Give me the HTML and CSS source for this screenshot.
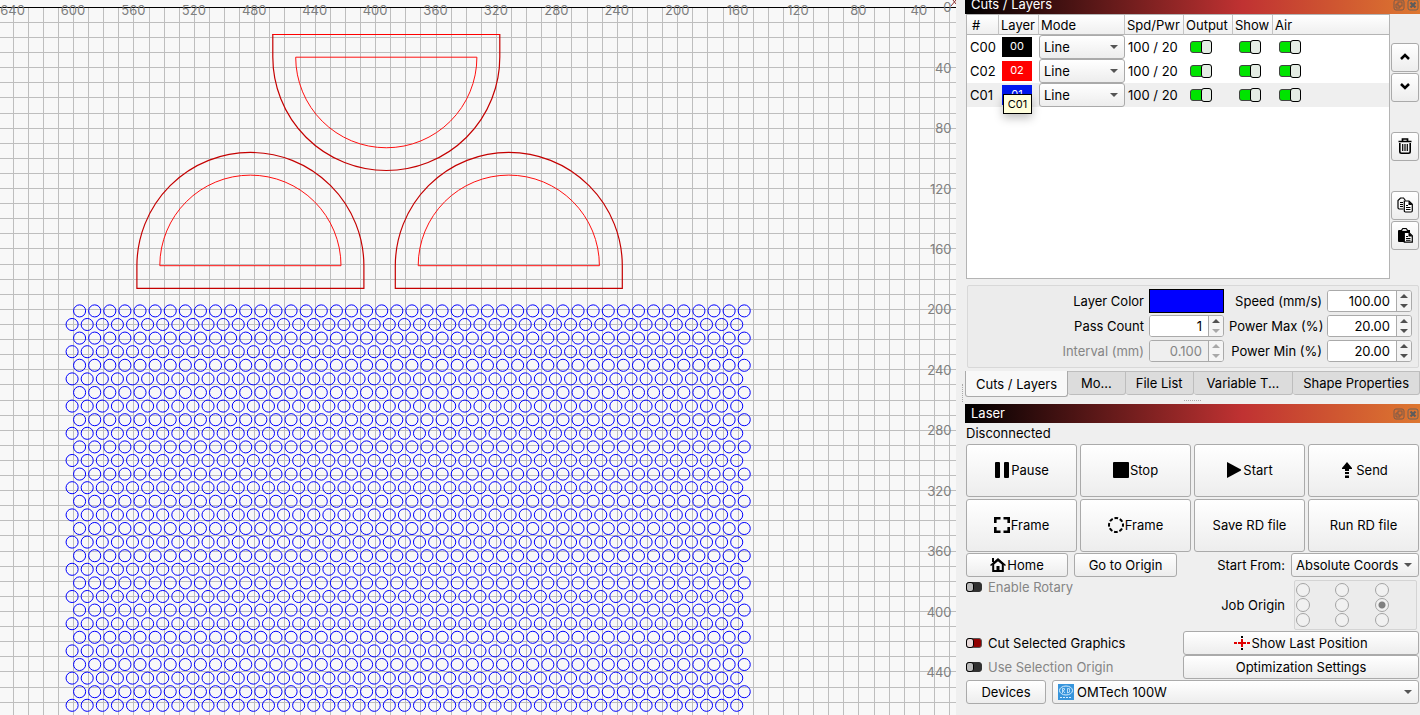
FILE: index.html
```html
<!DOCTYPE html>
<html lang="en">
<head>
<meta charset="utf-8">
<title>Laser workspace</title>
<link rel="stylesheet" href="styles.css">
</head>
<body>
<svg class="sprite" aria-hidden="true">
  <symbol id="i-float" viewBox="0 0 12 12"><g fill="none" stroke="#7b5a48"><rect x="1" y="1" width="10" height="10" rx="2"/><rect x="5" y="3" width="4" height="4"/><path d="M5 5H3v4h4V7"/></g></symbol>
  <symbol id="i-close" viewBox="0 0 12 12"><rect x="1" y="1" width="10" height="10" rx="2" fill="none" stroke="#6e6258"/><path d="M3.500 3.500l5 5M8.500 3.500l-5 5" stroke="#5c5c5c" stroke-width="2.200"/></symbol>
  <symbol id="i-spin-up" viewBox="0 0 8 4"><path d="M0 4L4 0l4 4z" fill="currentColor"/></symbol>
  <symbol id="i-spin-down" viewBox="0 0 8 4"><path d="M0 0h8L4 4z" fill="currentColor"/></symbol>
</svg>
<div class="app">
  <main class="canvas"><svg class="board" id="board" role="img" aria-label="Work area"></svg></main>
  <div class="splitter"><span class="dots-v"></span></div>
  <aside class="panel">
    <section class="dock dock-cuts">
      <header class="title title-cut"><h2>Cuts / Layers</h2><span class="title-icons"><svg><use href="#i-float"/></svg><svg><use href="#i-close"/></svg></span></header>
      <div class="cuts">
        <div class="list">
          <table class="layers">
            <colgroup><col class="c-num"><col class="c-layer"><col class="c-mode"><col class="c-spd"><col class="c-out"><col class="c-show"><col></colgroup>
            <thead><tr><th class="num">#</th><th>Layer</th><th>Mode</th><th>Spd/Pwr</th><th>Output</th><th>Show</th><th>Air</th></tr></thead>
            <tbody>
              <tr><td>C00</td><td><span class="chip chip-black">00</span></td><td><span class="pick"><select aria-label="Mode C00"><option>Line</option></select></span></td><td>100 / 20</td><td><input class="toggle" type="checkbox" checked aria-label="Output C00"></td><td><input class="toggle" type="checkbox" checked aria-label="Show C00"></td><td><input class="toggle" type="checkbox" checked aria-label="Air C00"></td></tr>
              <tr><td>C02</td><td><span class="chip chip-red">02</span></td><td><span class="pick"><select aria-label="Mode C02"><option>Line</option></select></span></td><td>100 / 20</td><td><input class="toggle" type="checkbox" checked aria-label="Output C02"></td><td><input class="toggle" type="checkbox" checked aria-label="Show C02"></td><td><input class="toggle" type="checkbox" checked aria-label="Air C02"></td></tr>
              <tr class="selected"><td>C01</td><td><span class="chip chip-blue">01<span class="tip" role="tooltip">C01</span></span></td><td><span class="pick"><select aria-label="Mode C01"><option>Line</option></select></span></td><td>100 / 20</td><td><input class="toggle" type="checkbox" checked aria-label="Output C01"></td><td><input class="toggle" type="checkbox" checked aria-label="Show C01"></td><td><input class="toggle" type="checkbox" checked aria-label="Air C01"></td></tr>
            </tbody>
          </table>
        </div>
        <div class="tools">
          <button class="btn tool" aria-label="Move up"><svg width="16" height="16" viewBox="0 0 16 16"><path d="M4 10l4-4 4 4" fill="none" stroke="#000" stroke-width="2.500"/></svg></button>
          <button class="btn tool" aria-label="Move down"><svg width="16" height="16" viewBox="0 0 16 16"><path d="M4 5l4 4 4-4" fill="none" stroke="#000" stroke-width="2.500"/></svg></button>
          <button class="btn tool apart" aria-label="Delete"><svg width="16" height="16" viewBox="0 0 16 16"><path d="M5.500 3V1h5v2M1.500 3.500h13" fill="none" stroke="#000" stroke-width="1.700"/><path d="M2.800 5v8.500q0 1.700 1.700 1.700h7q1.700 0 1.700-1.700V5" fill="none" stroke="#000" stroke-width="1.600"/><path d="M5.700 6v7M8 6v7M10.300 6v7" stroke="#000" stroke-width="1.200"/></svg></button>
          <button class="btn tool apart" aria-label="Copy"><svg width="16" height="16" viewBox="0 0 16 16"><path d="M6.500 12H2.200Q1 12 1 10.800V3.500L3.500 1H6.500L8.500 3.500" fill="none" stroke="#000" stroke-width="1.200"/><path d="M3 5.500h3M3 7.500h3M3 9.500h3" stroke="#000"/><path d="M7.300 4h4.700l3.300 3.300v6.500q0 1.200-1.200 1.200H8.500q-1.200 0-1.200-1.200z" fill="#fff" stroke="#000" stroke-width="1.200"/><path d="M11.500 4v4h4z"/><path d="M9 8.500h2M9 10.500h4.500M9 12.500h4.500" stroke="#000"/></svg></button>
          <button class="btn tool" aria-label="Paste"><svg width="16" height="16" viewBox="0 0 16 16"><path d="M2 3h2l1.500-2h4L11 3h2v3H7.500v9H2q-1 0-1-1V4q0-1 1-1z"/><path d="M5 4h5l-1-2H6z" fill="#ddd"/><path d="M7.300 5.500h4.700l3.300 3.300v6.400h-8z" fill="#fff" stroke="#000" stroke-width="1.200"/><path d="M11.500 5.500v4h4z"/><path d="M9 9.500h2M9 11.500h4.500M9 13.300h4.500" stroke="#000"/></svg></button>
        </div>
      </div>
      <div class="settings">
        <label for="color">Layer Color</label><button class="swatch" id="color" aria-label="Layer Color"></button>
        <label for="speed">Speed (mm/s)</label><span class="spin"><input id="speed" type="text" value="100.00"><span class="steps"><button aria-label="Up"><svg><use href="#i-spin-up"/></svg></button><button aria-label="Down"><svg><use href="#i-spin-down"/></svg></button></span></span>
        <label for="pass">Pass Count</label><span class="spin"><input id="pass" type="text" value="1"><span class="steps"><button aria-label="Up"><svg><use href="#i-spin-up"/></svg></button><button disabled aria-label="Down"><svg><use href="#i-spin-down"/></svg></button></span></span>
        <label for="pmax">Power Max (%)</label><span class="spin"><input id="pmax" type="text" value="20.00"><span class="steps"><button aria-label="Up"><svg><use href="#i-spin-up"/></svg></button><button aria-label="Down"><svg><use href="#i-spin-down"/></svg></button></span></span>
        <label class="muted" for="interval">Interval (mm)</label><span class="spin"><input id="interval" type="text" value="0.100" disabled><span class="steps"><button disabled aria-label="Up"><svg><use href="#i-spin-up"/></svg></button><button disabled aria-label="Down"><svg><use href="#i-spin-down"/></svg></button></span></span>
        <label for="pmin">Power Min (%)</label><span class="spin"><input id="pmin" type="text" value="20.00"><span class="steps"><button aria-label="Up"><svg><use href="#i-spin-up"/></svg></button><button aria-label="Down"><svg><use href="#i-spin-down"/></svg></button></span></span>
      </div>
      <div class="tabs" role="tablist">
        <button class="tab active" role="tab" aria-selected="true">Cuts / Layers</button><button class="tab" role="tab">Mo...</button><button class="tab" role="tab">File List</button><button class="tab" role="tab">Variable T...</button><button class="tab" role="tab">Shape Properties</button>
      </div>
    </section>
    <div class="divider"><span class="dots-h"></span></div>
    <section class="dock">
      <header class="title"><h2>Laser</h2><span class="title-icons"><svg><use href="#i-float"/></svg><svg><use href="#i-close"/></svg></span></header>
      <div class="laser">
        <p class="status">Disconnected</p>
        <div class="actions">
          <button class="btn"><svg width="16" height="16"><rect x="1" width="5" height="16" rx="1"/><rect x="10" width="5" height="16" rx="1"/></svg>Pause</button>
          <button class="btn"><svg width="16" height="16"><rect width="16" height="16" rx="1"/></svg>Stop</button>
          <button class="btn"><svg width="16" height="16"><path d="M1 0l14 7.500v1L1 16z"/></svg>Start</button>
          <button class="btn"><svg width="16" height="16"><path d="M8 0l5 6v1h-3v2H6V7H3V6zM6 10h4v2H6zM6 13.500h4V16H6z"/></svg>Send</button>
          <button class="btn"><svg width="16" height="16"><path d="M1.300 6V1.300H6.500M9.500 1.300h5.200V6M14.700 10v4.700H9.500M6.500 14.700H1.300V10" fill="none" stroke="#000" stroke-width="2.600"/></svg>Frame</button>
          <button class="btn"><svg width="16" height="16"><circle cx="8" cy="8" r="7" fill="none" stroke="#000" stroke-width="2" stroke-dasharray="3.700 1.798" stroke-dashoffset="1.800"/></svg>Frame</button>
          <button class="btn">Save RD file</button>
          <button class="btn">Run RD file</button>
        </div>
        <div class="origin-row">
          <button class="btn home"><svg width="16" height="16"><path d="M0 8L8 1l8 7-1 1-7-6-7 6z"/><path d="M2 1h2v4H2z"/><path d="M3.200 7v7h9.600V7M3.200 7L8 3l4.800 4" fill="none" stroke="#000" stroke-width="2"/><path d="M6.500 9h3v5h-3z"/></svg>Home</button>
          <button class="btn goto">Go to Origin</button>
          <label class="grow" for="from">Start From:</label>
          <span class="pick from"><select id="from"><option>Absolute Coords</option></select></span>
        </div>
        <div class="options">
          <label class="opt muted"><input class="mini" type="checkbox" disabled>Enable Rotary</label>
          <span class="job-label">Job Origin</span>
          <div class="job" role="radiogroup" aria-label="Job Origin">
            <input type="radio" name="job" aria-label="Top left"><input type="radio" name="job" aria-label="Top"><input type="radio" name="job" aria-label="Top right">
            <input type="radio" name="job" aria-label="Left"><input type="radio" name="job" aria-label="Centre"><input type="radio" name="job" checked aria-label="Right">
            <input type="radio" name="job" aria-label="Bottom left"><input type="radio" name="job" aria-label="Bottom"><input type="radio" name="job" aria-label="Bottom right">
          </div>
        </div>
        <div class="pair">
          <label class="opt"><input class="mini mini-red" type="checkbox">Cut Selected Graphics</label>
          <button class="btn"><svg width="16" height="16"><path d="M8 1v2M8 13v2" stroke="#000" stroke-width="2"/><path d="M0 8h3M4 8h3M9 8h3M13 8h3M8 4v3M8 9v3" stroke="#e00000" stroke-width="2"/><circle cx="8" cy="8" r="1.500" fill="#e00000"/></svg>Show Last Position</button>
          <label class="opt muted"><input class="mini" type="checkbox" disabled>Use Selection Origin</label>
          <button class="btn">Optimization Settings</button>
        </div>
        <div class="device-row">
          <button class="btn devices">Devices</button>
          <span class="pick device"><svg class="device-icon" width="16" height="16"><rect width="16" height="16" fill="#3795dc"/><g fill="none" stroke="#d8efff"><ellipse cx="8" cy="6.500" rx="6.500" ry="4.500"/><path d="M4.500 9V4.500q3-.5 2 1.500l-1.500.7L7 9M9.500 9V4.500q3-.5 2 1.800 1 2.200-2 2.700" stroke-width=".8"/><path d="M2 13.500h12" stroke-dasharray="2 1"/></g></svg><select aria-label="Device"><option>OMTech 100W</option></select></span>
        </div>
      </div>
    </section>
  </aside>
</div>
<script src="board.js"></script>
</body>
</html>
```
FILE: styles.css
```css
*, *::before, *::after { box-sizing: border-box; }
body { margin: 0; background: #efefef; color: #000; font: 13px/16px Inter, "Liberation Sans", sans-serif; }
button, input, select { font: inherit; color: inherit; margin: 0; padding: 0; }
h2, p { margin: 0; font: inherit; }
.sprite { display: none; }
.app { display: grid; grid-template-columns: minmax(0, 1fr) 9px 455px; height: 100vh; overflow: hidden; }
.canvas { background: #f8f8f8; overflow: hidden; }
.board { display: block; width: 100%; height: 100%; }
.board text { fill: #808080; font-size: 13px; }
.splitter { display: flex; justify-content: center; align-items: center; padding: 70px 0 0 4px; }
.dots-v { height: 18px; border-left: 1px dotted #aaa; }
.panel { display: flex; flex-direction: column; min-height: 0; }
.dock-cuts { flex: 1; display: flex; flex-direction: column; min-height: 0; }

.title { display: flex; justify-content: space-between; align-items: center; height: 19px; padding: 0 1px 0 6px; color: #fff; background: linear-gradient(90deg, #000, #c03232 61%, #dd7730); overflow: hidden; }
.title h2 { line-height: 19px; }
.title-cut { height: 14px; align-items: flex-end; }
.title-icons { display: flex; gap: 2px; }
.title-icons svg { width: 12px; height: 12px; }
.title-cut .title-icons { padding-bottom: 3px; }

.btn { display: flex; align-items: center; justify-content: center; gap: 1px; border: 1px solid #aaa; border-radius: 3px; background: linear-gradient(#fff, #ededed); white-space: nowrap; }

.cuts { flex: 1; display: flex; gap: 1px; padding: 0 1px; min-height: 0; }
.list { flex: 1; min-width: 0; background: #fff; border: 1px solid #b4b4b4; }
.tools { width: 28px; display: flex; flex-direction: column; gap: 1px; padding-top: 29px; }
.tool { height: 29px; padding-bottom: 2px; }
.apart { margin-top: 29px; }

.layers { width: 100%; table-layout: fixed; border-collapse: separate; border-spacing: 0; }
.c-num { width: 32px; } .c-layer { width: 40px; } .c-mode { width: 86px; } .c-spd { width: 59px; } .c-out { width: 49px; } .c-show { width: 40px; }
.layers th { height: 20px; padding: 1px 0 0 2px; font-weight: 400; text-align: left; background: linear-gradient(#fff, #efefef); border-right: 1px solid #c4c4c4; border-bottom: 1px solid #b4b4b4; }
.layers th:last-child { border-right: 0; }
.layers .num { padding-left: 5px; }
.layers td { height: 24px; padding: 0 0 0 3px; white-space: nowrap; }
.layers td:nth-child(3) { padding: 0; }
.layers td:nth-child(n+5) { padding-left: 6px; }
.selected { background: #efefef; }
.chip { position: relative; display: block; width: 30px; height: 20px; font-size: 11px; line-height: 19px; text-align: center; color: #fff; }
.chip-black { background: #000; } .chip-red { background: #f00; } .chip-blue { background: #0018f0; }
.tip { position: absolute; left: 1px; top: 9px; width: 29px; height: 20px; border: 1px solid #000; background: #ffffdc; color: #000; line-height: 18px; box-shadow: 0 4px 10px rgba(0, 0, 0, .25); }

.pick { position: relative; display: block; height: 24px; }
.pick::after { content: ""; position: absolute; right: 7px; top: 10px; border: 4px solid transparent; border-top-color: #555; border-bottom: 0; pointer-events: none; }
.pick select { appearance: none; display: block; width: 100%; height: 100%; padding: 0 16px 0 4px; border: 1px solid #aaa; border-radius: 3px; background: linear-gradient(#fff, #ededed); }

.toggle { appearance: none; display: flex; justify-content: flex-end; align-items: center; width: 22px; height: 12px; border: 1px solid #444; border-radius: 3px; background: #00e400; }
.toggle::before { content: ""; flex: none; width: 11px; height: 14px; margin-right: -1px; border: 1px solid #000; border-radius: 3px; background: #e4ece4; }
.toggle:not(:checked) { justify-content: flex-start; }

.settings { display: grid; grid-template-columns: 1fr 75px 93px 85px; column-gap: 5px; grid-auto-rows: 25px; align-items: center; margin: 6px 1px 3px 2px; padding: 2px 6px 4px 0; border: 1px solid #d8d8d8; border-radius: 2px; background: #ececec; text-align: right; white-space: nowrap; }
.muted { color: #858585; }
.swatch { height: 24px; border: 1px solid #000; background: #00f; }
.spin { display: flex; height: 22px; border: 1px solid #aaa; border-radius: 3px; background: #fff; overflow: hidden; }
.spin input { flex: 1; min-width: 0; border: 0; padding-right: 6px; text-align: right; background: #fff; outline: 0; }
.spin input:disabled { background: #efefef; color: #858585; }
.steps { width: 15px; display: flex; flex-direction: column; border-left: 1px solid #aaa; background: #f4f4f4; }
.steps button { flex: 1; display: flex; align-items: center; justify-content: center; border: 0; background: none; color: #505050; }
.steps button:disabled { color: #a8a8a8; }
.steps svg { width: 8px; height: 4px; }

.tabs { display: flex; align-items: flex-start; height: 26px; }
.tab { height: 24px; padding: 0 10px; border: 1px solid #bdbdbd; border-left: 0; border-radius: 0 0 3px 3px; background: #dcdcdc; white-space: nowrap; }
.tab:nth-child(2), .tab:nth-child(4) { padding: 0 12px; flex: 1 1 auto; }
.tab.active { height: 26px; border: 1px solid #aaa; border-top: 0; background: #f8f8f8; }
.divider { display: flex; justify-content: center; align-items: center; height: 7px; }
.dots-h { width: 17px; border-top: 1px dotted #aaa; }

.laser { padding: 2px 1px 11px; }
.status { height: 19px; line-height: 17px; }
.actions { display: grid; grid-template-columns: repeat(4, 1fr); grid-auto-rows: 53px; gap: 2px 3px; }
.actions .btn { padding-bottom: 2px; }
.origin-row { display: flex; align-items: center; gap: 6px; margin-top: 1px; }
.origin-row .btn { height: 24px; }
.home { width: 102px; } .goto { width: 103px; }
.grow { flex: 1; text-align: right; }
.from { width: 128px; }
.options { display: flex; align-items: center; height: 54px; padding: 2px 2px 0 0; }
.opt { display: flex; align-items: center; gap: 6px; }
.options .opt { align-self: flex-start; flex: 1; }
.job-label { margin-right: 9px; }
.job { display: grid; grid-template-columns: 39px 40px 40px; grid-auto-rows: 15px; width: 123px; height: 50px; padding: 2px 0 0 1px; border: 1px solid #d4d4d4; border-radius: 2px; background: #ececec; }
.job input { appearance: none; width: 14px; height: 14px; border: 1px solid #a4a4a4; border-radius: 50%; background: #f1f1f1; }
.job input:checked { background: radial-gradient(circle, #808080 3px, #f1f1f1 4px); }
.mini { appearance: none; display: flex; width: 16px; height: 10px; border: 1px solid #333; border-radius: 3px; background: #303030; }
.mini::before { content: ""; width: 8px; height: 10px; margin: -1px; border: 1px solid #000; border-radius: 3px; background: #bbb; }
.mini-red { background: #900000; border-color: #555; }
.mini-red::before { background: #e8dada; }
.pair { display: grid; grid-template-columns: 1fr 236px; grid-auto-rows: 24px; margin-bottom: 1px; }
.device-row { display: flex; gap: 6px; }
.devices { width: 80px; }
.device { flex: 1; }
.device select { padding-left: 24px; }
.device-icon { position: absolute; left: 6px; top: 4px; }
```
FILE: board.js
```javascript
(function () {
  var NS = 'http://www.w3.org/2000/svg';
  var board = document.getElementById('board');
  var PX = 1.5105, X0 = 979.8, Y0 = 7.3, W = board.clientWidth, H = board.clientHeight;

  function add(name, attrs, text) {
    var el = document.createElementNS(NS, name);
    for (var key in attrs) el.setAttribute(key, attrs[key]);
    if (text !== undefined) el.textContent = text;
    board.appendChild(el);
  }
  function path(d, stroke, width) {
    add('path', { d: d, fill: 'none', stroke: stroke, 'stroke-width': width || 1 });
  }

  // Grid, one line every 10 mm
  var grid = '', mm, x, y;
  for (mm = 10; (x = X0 - mm * PX) > 0; mm += 10) if (x < W) grid += 'M' + (Math.floor(x) + 0.5) + ' 7V' + H;
  for (mm = 10; (y = Y0 + mm * PX) < H; mm += 10) grid += 'M0 ' + (Math.floor(y) + 0.5) + 'H' + W;
  path(grid, '#bebebe');
  path('M0 7.500H' + W, '#000');
  path('M951 6l5-6M953 0l3 4', '#8c3030');

  // Half-round outlines; dir 1 has its arc below, -1 above
  function half(cx, base, r, straight, dir, stroke, width) {
    var a = base + straight * dir;
    path('M' + (cx - r) + ' ' + a + 'V' + base + 'H' + (cx + r) + 'V' + a + 'A' + r + ' ' + r + ' 0 0 ' + (dir > 0 ? 1 : 0) + ' ' + (cx - r) + ' ' + a, stroke, width);
  }
  [[386.3, 34.5, 1], [250.4, 288.4, -1], [508.8, 288.4, -1]].forEach(function (s) {
    half(s[0], s[1], 113.5, 22.5, s[2], '#c40000', 1.2);
    half(s[0], s[1] + 22.7 * s[2], 90.6, 0, s[2], '#ff1010', 1);
  });
  path('M272.500 34.500H500', '#f00');

  // Staggered hole pattern
  for (var row = 0; row < 30; row++) {
    for (var col = 0; col < 45; col++) {
      add('circle', { cx: (row % 2 ? 72.1 : 79.6) + col * 15.105, cy: 310.9 + row * 13.6, r: 6.04, fill: 'none', stroke: '#00f' });
    }
  }

  // Ruler labels, every 40 mm
  for (mm = 40; mm <= 640; mm += 40) add('text', { x: X0 - mm * PX - 0.5, y: 15, 'text-anchor': 'middle' }, mm);
  for (mm = 0; mm <= 440; mm += 40) add('text', { x: 951.500, y: Y0 + mm * PX + 5, 'text-anchor': 'end' }, mm);
})();
```
